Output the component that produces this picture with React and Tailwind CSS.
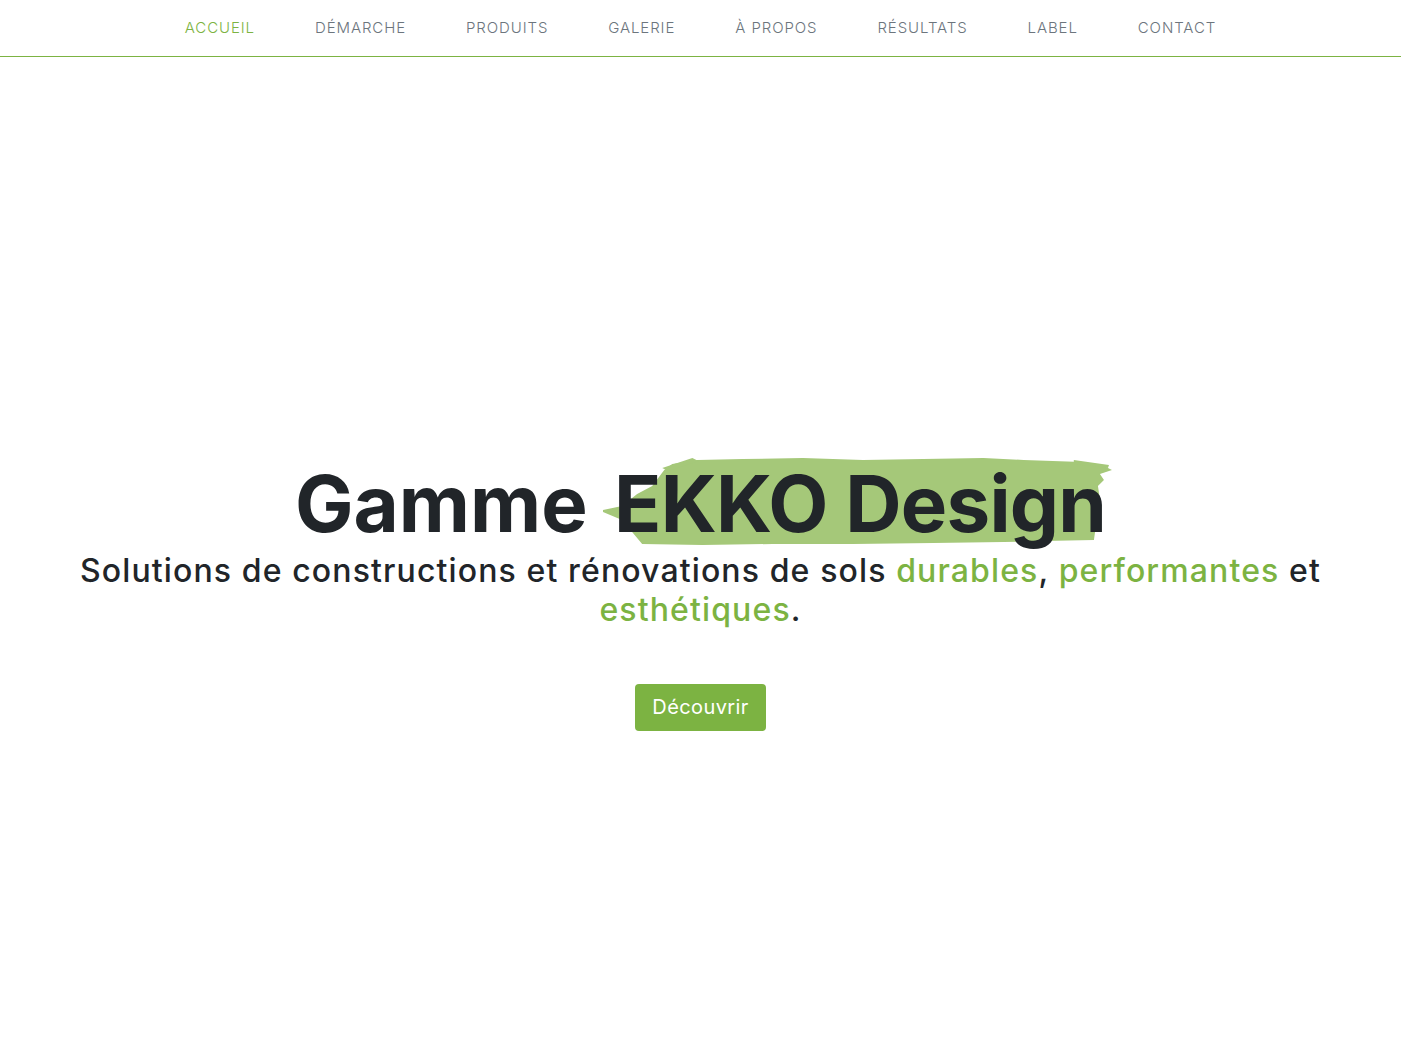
import React from "react";

const links = ["Accueil", "Démarche", "Produits", "Galerie", "À propos", "Résultats", "Label", "Contact"];

function Brush() {
  return (
    <svg
      className="absolute left-[-12px] top-[-1px] w-[512px] h-[90px] -z-10"
      viewBox="0 0 510 90"
      preserveAspectRatio="none"
      aria-hidden="true"
    >
      <path
        fill="#a5c879"
        d="M1 54 L20 50 L35 38 L50 30 L62 14 L70 8 L95 4 L140 3 L200 2 L260 4 L320 3 L380 2 L420 4 L478 6 L500 10 L508 14 L496 18 L500 24 L494 30 L497 50 L492 70 L490 84 L440 85 L400 86 L330 87 L250 88 L170 88 L100 89 L40 88 L30 76 L20 64 L1 56 Z"
      />
      <path fill="#a5c879" d="M60 12 L90 2 L96 5 L66 15 Z" />
      <path fill="#a5c879" d="M470 4 L505 9 L504 12 L470 8 Z" />
    </svg>
  );
}

export default function App() {
  return (
    <div className="min-h-screen bg-white font-['Inter',sans-serif]">
      {/* Nav */}
      <nav className="h-[57px] border-b border-[#7cb342] flex items-center justify-center gap-[60px]">
        {links.map((l, i) => (
          <a
            key={l}
            href="#"
            className={
              "uppercase text-[15px] font-light tracking-[0.06em] " +
              (i === 0 ? "text-[#7cb342]" : "text-[#6c757d]")
            }
          >
            {l}
          </a>
        ))}
      </nav>

      {/* Hero */}
      <section className="pt-[400px] text-center text-[#212529]">
        <h1 className="text-[78px] leading-[1.2] font-bold">
          Gamme{" "}
          <span className="relative inline-block ml-2 z-0 tracking-[-0.01em]">
            <Brush />
            EKKO Design
          </span>
        </h1>
        <p className="max-w-[1270px] mx-auto text-[32px] leading-[39px] font-medium tracking-[0.035em]">
          Solutions de constructions et rénovations de sols{" "}
          <span className="text-[#7cb342]">durables</span>,{" "}
          <span className="text-[#7cb342]">performantes</span> et{" "}
          <span className="text-[#7cb342]">esthétiques</span>.
        </p>
        <div className="mt-[55px] flex justify-center">
          <button className="bg-[#7cb342] text-white text-[20px] tracking-[0.02em] h-[47px] px-[17px] rounded">
            Découvrir
          </button>
        </div>
      </section>
    </div>
  );
}
